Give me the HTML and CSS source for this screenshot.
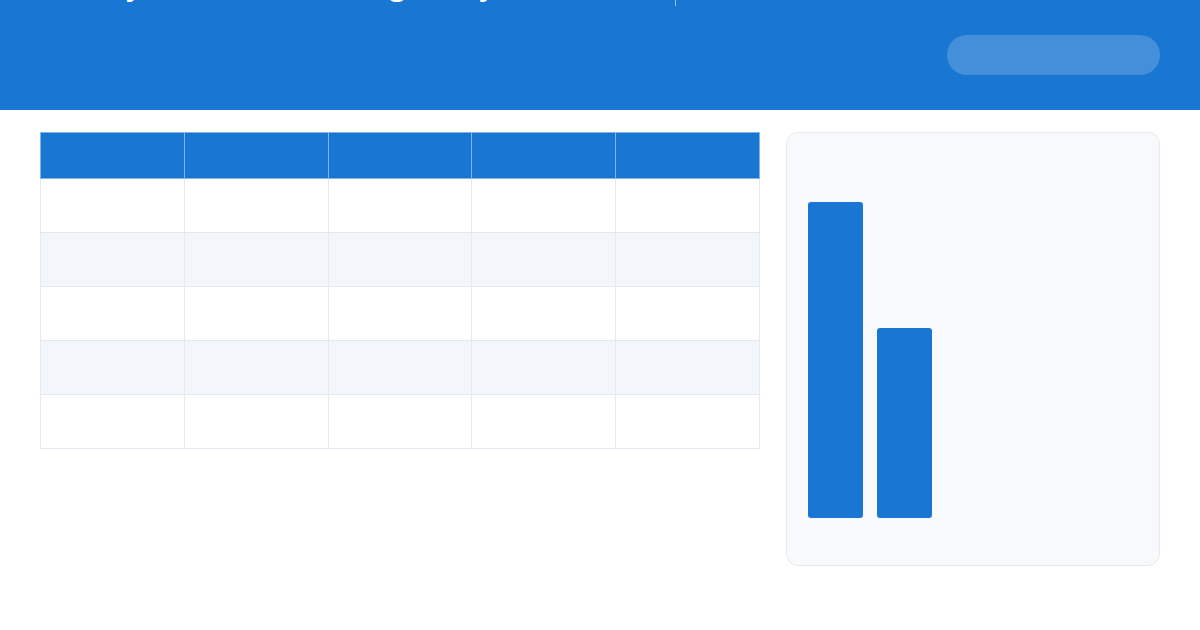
FILE: index.html
```html
<!DOCTYPE html>
<html lang="en">
<head>
  <meta charset="UTF-8">
  <meta name="viewport" content="width=device-width, initial-scale=1.0">
  <title>Weekly report</title>
  <link rel="stylesheet" href="styles.css">
</head>
<body>

  <header class="topbar">
    <div class="titles">
      <h1 class="title">Weekly</h1>
      <span class="sub">Signups by day, grouping</span>
      <h1 class="title">(Region Qy)</h1>
      <span class="sub muted">Sugg. totals</span>
      <span class="divider"></span>
    </div>
    <div class="pill"></div>
  </header>

  <main class="content">
    <!-- tabela -->
    <table class="grid">
      <thead>
        <tr><th></th><th></th><th></th><th></th><th></th></tr>
      </thead>
      <tbody>
        <tr><td></td><td></td><td></td><td></td><td></td></tr>
        <tr><td></td><td></td><td></td><td></td><td></td></tr>
        <tr><td></td><td></td><td></td><td></td><td></td></tr>
        <tr><td></td><td></td><td></td><td></td><td></td></tr>
        <tr><td></td><td></td><td></td><td></td><td></td></tr>
      </tbody>
    </table>

    <!-- grafico -->
    <section class="chart">
      <div class="bar" style="height: 316px"></div>
      <div class="bar" style="height: 190px"></div>
    </section>
  </main>

</body>
</html>
```

FILE: styles.css
```css
* {
  margin: 0;
  padding: 0;
  box-sizing: border-box;
}
html, body {
  width: 100%;
  height: 100%;
  background-color: #fff;
  font-family: 'Open Sans', sans-serif;
  color: #1f2937;
}

/* Cabeçalho */
.topbar {
  height: 110px;
  background-color: #1976d2;
  display: flex;
  justify-content: space-between;
  align-items: flex-start;
  padding: 0 40px;
  overflow: hidden;
}
.titles {
  display: flex;
  align-items: baseline;
  gap: 14px;
  margin-top: -34px;
  white-space: nowrap;
}
.title {
  font-size: 28px;
  font-weight: 700;
  color: #fff;
  line-height: 1.3;
}
.sub {
  font-size: 15px;
  color: #4b5563;
}
.sub.muted {
  color: #8a94a6;
}
.divider {
  width: 1px;
  height: 40px;
  background-color: #9ec2ea;
  align-self: flex-end;
  margin-left: 62px;
}
.pill {
  width: 213px;
  height: 40px;
  margin-top: 35px;
  border-radius: 20px;
  background-color: rgba(255, 255, 255, 0.19);
}

/* Conteúdo */
.content {
  display: flex;
  align-items: flex-start;
  gap: 26px;
  padding: 22px 40px;
}
.grid {
  width: 720px;
  flex: 0 0 720px;
  border-collapse: collapse;
  table-layout: fixed;
}
.grid th, .grid td {
  border: 1px solid #e4e9f1;
}
.grid th {
  height: 46px;
  background-color: #1976d2;
  border-color: #84b4e8;
}
.grid td {
  height: 54px;
  background-color: #fff;
}
.grid tbody tr:nth-child(even) td {
  background-color: #f3f6fa;
}

.chart {
  width: 374px;
  height: 434px;
  background-color: #f8f9fb;
  border: 1px solid #e7eaf0;
  border-radius: 12px;
  display: flex;
  align-items: flex-end;
  gap: 14px;
  padding: 0 21px 47px;
}
.bar {
  width: 55px;
  background-color: #1976d2;
  border-radius: 3px;
}
```
